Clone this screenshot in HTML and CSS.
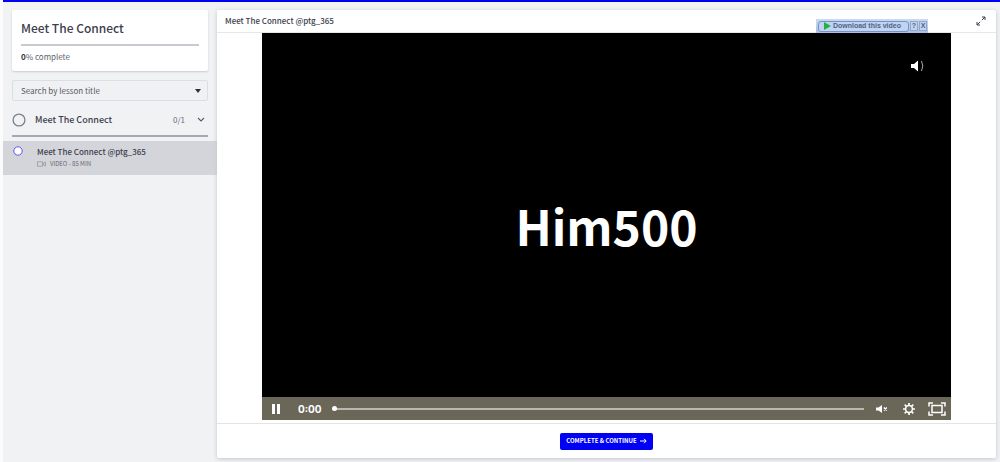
FILE: index.html
```html
<!DOCTYPE html>
<html lang="en">
<head>
<meta charset="utf-8">
<title>Meet The Connect</title>
<link rel="stylesheet" href="styles.css">
</head>
<body>
<div class="page">
  <aside class="sidebar">
    <section class="course">
      <h1 class="course-title">Meet The Connect</h1>
      <div class="course-bar"></div>
      <p class="course-progress"><b>0</b>% complete</p>
    </section>
    <div class="search">
      <select class="search-select" aria-label="Search by lesson title">
        <option>Search by lesson title</option>
      </select>
      <svg class="search-caret" viewBox="0 0 6 4" aria-hidden="true"><path d="M0 0h6L3 4z" fill="#2b303c"/></svg>
    </div>
    <button class="chapter" type="button">
      <svg class="chapter-ring" viewBox="0 0 14 14" aria-hidden="true"><circle cx="7" cy="7" r="5.9" fill="none" stroke="#7c808b" stroke-width="1.3"/></svg>
      <span class="chapter-name">Meet The Connect</span>
      <span class="chapter-count">0/1</span>
      <svg class="chapter-arrow" viewBox="0 0 8 6" aria-hidden="true"><path d="M1 1l3 3 3-3" fill="none" stroke="#555a66" stroke-width="1.1"/></svg>
    </button>
    <a class="lesson" href="#lesson">
      <svg class="lesson-ring" viewBox="0 0 10 10" aria-hidden="true"><circle cx="5" cy="5" r="4.2" fill="#fff" stroke="#5a55ee" stroke-width="1"/></svg>
      <span class="lesson-text">
        <span class="lesson-name">Meet The Connect @ptg_365</span>
        <span class="lesson-meta">
          <svg class="lesson-camera" viewBox="0 0 9 6" aria-hidden="true"><path d="M.5.8h5.2v4.4H.5zM5.7 3L8.4 1v4z" fill="none" stroke="#8b8e98" stroke-width=".7"/></svg>
          VIDEO - 85 MIN
        </span>
      </span>
    </a>
  </aside>

  <main class="content">
    <header class="content-head">
      <h2 class="content-title">Meet The Connect @ptg_365</h2>
      <button class="icon-button" type="button" aria-label="Expand">
        <svg class="expand-icon" viewBox="0 0 10 10" aria-hidden="true"><path d="M6 1h3v3M9 1L5.8 4.2M4 9H1V6M1 9l3.2-3.2" fill="none" stroke="#3c404b" stroke-width="1"/></svg>
      </button>
    </header>
    <div class="stage">
      <div class="player">
        <div class="download">
          <button class="download-main" type="button">
            <svg class="download-play" viewBox="0 0 7 8" aria-hidden="true"><path d="M0 0l7 4-7 4z" fill="#26b043"/></svg>
            Download this video
          </button>
          <button class="download-small" type="button">?</button>
          <button class="download-small" type="button">X</button>
        </div>
        <div class="screen">
          <svg class="screen-sound" viewBox="0 0 16 12" aria-hidden="true"><path d="M1 4h3l4-3.500v11L4 8H1z" fill="#fff"/><path d="M11.500 1q2.600 5 0 10" fill="none" stroke="#aaa" stroke-width="1"/></svg>
          <span class="screen-text">Him500</span>
        </div>
        <div class="controls">
          <button class="icon-button" type="button" aria-label="Pause">
            <svg class="pause-icon" viewBox="0 0 8 10" aria-hidden="true"><path d="M0 0h3v10H0zM5 0h3v10H5z" fill="#fff"/></svg>
          </button>
          <span class="time">0:00</span>
          <input class="seek" type="range" min="0" max="100" value="0" aria-label="Seek">
          <button class="icon-button" type="button" aria-label="Unmute">
            <svg class="mute-icon" viewBox="0 0 12 8" aria-hidden="true"><path d="M0 2.500h2.500L6 0v8L2.500 5.500H0z" fill="#fff"/><path d="M7.800 2.500l3 3M10.800 2.500l-3 3" stroke="#fff" stroke-width="1.300"/></svg>
          </button>
          <button class="icon-button" type="button" aria-label="Settings">
            <svg class="gear-icon" viewBox="0 0 14 14" aria-hidden="true"><g fill="none" stroke="#fff"><circle cx="7" cy="7" r="3.400" stroke-width="1.500"/><path d="M7 1v2.500M7 10.500V13M1 7h2.500M10.500 7H13M2.700 2.700l1.800 1.800M9.500 9.500l1.800 1.800M2.700 11.300l1.800-1.800M9.500 4.500l1.800-1.800" stroke-width="1.700"/></g></svg>
          </button>
          <button class="icon-button" type="button" aria-label="Fullscreen">
            <svg class="full-icon" viewBox="0 0 18 14" aria-hidden="true"><path d="M4 3.500h10v7H4zM1 4.500V1h4M13 1h4v3.500M17 9.500V13h-4M5 13H1V9.500" fill="none" stroke="#fff" stroke-width="1.500"/></svg>
          </button>
        </div>
      </div>
    </div>
    <footer class="content-foot">
      <button class="complete" type="button">COMPLETE &amp; CONTINUE
        <svg class="complete-arrow" viewBox="0 0 7 6" aria-hidden="true"><path d="M0 3h6M4 .8L6.200 3 4 5.200" fill="none" stroke="#fff" stroke-width="1"/></svg>
      </button>
    </footer>
  </main>
</div>
</body>
</html>
```
FILE: styles.css
```css
* { box-sizing: border-box; }
body {
  margin: 0;
  padding-left: 3px;
  background: #fbfbfc;
  color: #3c404d;
  font-family: "Noto Sans CJK SC", "Noto Sans", sans-serif;
  font-size: 8px;
  line-height: 12px;
}
h1, h2, p { margin: 0; }
button, select, input { font: inherit; color: inherit; margin: 0; }
button { padding: 0; border: 0; background: none; cursor: pointer; }
svg { display: block; flex: none; }

.page {
  display: flex;
  align-items: stretch;
  min-height: 100vh;
  border-top: 2px solid #0000f5;
  background: #f1f2f4;
}
.sidebar { flex: none; width: 214px; padding-top: 8px; }
.course {
  margin: 0 9px;
  padding: 9px 9px 8px;
  background: #fff;
  border-radius: 2px;
  box-shadow: 0 1px 2px #c9cbd1;
}
.course-title { font-size: 12px; line-height: 18px; font-weight: 500; }
.course-bar { height: 2px; margin: 7px 0 5px; background: #c8cad0; }
.course-progress { color: #5d616c; }
.course-progress b { color: #2f3340; }

.search { position: relative; margin: 9px 9px 0; }
.search-select {
  display: block;
  width: 100%;
  height: 21px;
  padding: 0 8px;
  appearance: none;
  border: 1px solid #dbdee2;
  border-radius: 2px;
  background: #f0f1f3;
  color: #585c67;
}
.search-caret { position: absolute; right: 7px; top: 9px; width: 6px; height: 4px; }

.chapter {
  display: flex;
  align-items: center;
  width: 196px;
  height: 36px;
  margin: 0 9px;
  padding-top: 4px;
  border-bottom: 2px solid #a5a8b1;
  text-align: left;
}
.chapter-ring { width: 14px; height: 14px; }
.chapter-name { flex: 1; margin-left: 9px; font-size: 9px; font-weight: 500; }
.chapter-count { color: #686c77; }
.chapter-arrow { width: 8px; height: 6px; margin: 0 3px 0 12px; }

.lesson {
  display: flex;
  align-items: flex-start;
  height: 34px;
  margin-top: 4px;
  padding: 5px 10px;
  background: #d4d5da;
  color: inherit;
  text-decoration: none;
}
.lesson-ring { width: 10px; height: 10px; }
.lesson-text { margin-left: 14px; }
.lesson-name { display: block; font-weight: 500; }
.lesson-meta {
  display: flex;
  align-items: center;
  gap: 4px;
  font-size: 6px;
  color: #666974;
}
.lesson-camera { width: 9px; height: 6px; }

.content {
  flex: 1;
  align-self: flex-start;
  min-width: 0;
  margin: 8px 4px 4px 0;
  background: #fff;
  border-radius: 2px;
  box-shadow: 0 1px 4px #c3c5ca;
}
.content-head {
  display: flex;
  align-items: center;
  justify-content: space-between;
  height: 23px;
  padding: 0 10px 0 8px;
  border-bottom: 1px solid #e6e7ea;
}
.content-title { font-size: 8px; font-weight: 500; }
.expand-icon { width: 10px; height: 10px; }
.stage { padding: 0 45px 3px; }
.player { position: relative; }
.download {
  position: absolute;
  right: 23px;
  bottom: 100%;
  display: flex;
  align-items: center;
  gap: 1px;
  height: 14px;
  padding: 0 1px 0 2px;
  background: linear-gradient(#c9daf2, #a8bfe3);
  color: #4f6386;
  font-family: "Liberation Sans", Arial, sans-serif;
  font-size: 7px;
  line-height: 10px;
  font-weight: 700;
}
.download-main {
  display: flex;
  align-items: center;
  gap: 2px;
  height: 11px;
  padding: 0 7px 0 5px;
  border: 1px solid #7793c3;
  border-radius: 3px;
  background: #bfd3f2;
}
.download-play { width: 7px; height: 8px; }
.download-small {
  width: 8px;
  height: 10px;
  border: 1px solid #91a8ce;
  background: #c2d3ee;
  line-height: 8px;
}
.screen {
  position: relative;
  display: grid;
  place-items: center;
  aspect-ratio: 690 / 365;
  background: #000;
}
.screen-sound { position: absolute; top: 27px; right: 25px; width: 16px; height: 12px; }
.screen-text {
  padding-top: 20px;
  color: #fff;
  font-size: 48px;
  line-height: 54px;
  font-weight: 700;
}
.controls {
  display: flex;
  align-items: center;
  height: 23px;
  padding: 0 5px 0 10px;
  gap: 16px;
  background: #6a6759;
  color: #fff;
}
.pause-icon { width: 8px; height: 10px; }
.time { margin-left: 2px; font-family: Inter, sans-serif; font-size: 10px; font-weight: 700; }
.seek {
  flex: 1;
  min-width: 0;
  height: 10px;
  margin-left: -6px;
  margin-right: -4px;
  appearance: none;
  background: linear-gradient(#b9b7ae, #b9b7ae) center / 100% 2px no-repeat;
}
.seek::-webkit-slider-thumb {
  appearance: none;
  width: 5px;
  height: 5px;
  border-radius: 50%;
  background: #fff;
}
.mute-icon { width: 12px; height: 8px; margin-right: -2px; }
.gear-icon { width: 14px; height: 14px; }
.full-icon { width: 18px; height: 14px; margin-left: -4px; }

.content-foot {
  display: flex;
  align-items: center;
  justify-content: center;
  height: 35px;
  border-top: 1px solid #e2e4e7;
}
.complete {
  display: flex;
  align-items: center;
  gap: 3px;
  height: 17px;
  padding: 0 6px;
  border-radius: 2px;
  background: #0000f5;
  color: #fff;
  font-size: 6px;
  font-weight: 700;
}
.complete-arrow { width: 7px; height: 6px; }
```
